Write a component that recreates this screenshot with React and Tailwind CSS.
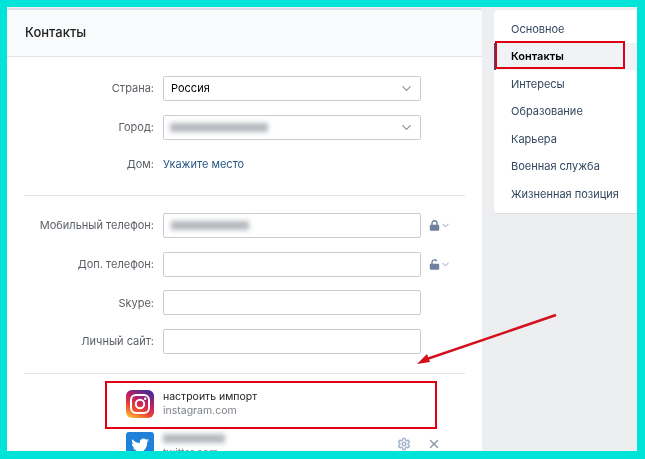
import { ChevronDown, X, Settings } from 'lucide-react';

const labelClass = 'w-[156px] pr-[9px] text-right text-[11px] text-[#5a5f66] shrink-0';
const boxClass = 'w-[258px] h-[25px] bg-white border border-[#c9ccd1] rounded-[2px] flex items-center';

const Smudge = ({ className }) => <div className={`h-[9px] bg-[#b4b8bd] blur-[2.5px] ${className}`} />;

const PadLock = ({ open }) => (
  <svg width="11" height="11" viewBox="0 0 11 11">
    <path
      d={open ? 'M3 5V3.2a2.5 2.5 0 0 1 4.8-.9' : 'M3 5V3.2a2.5 2.5 0 0 1 5 0V5'}
      fill="none"
      stroke="#6f80a0"
      strokeWidth="1.4"
    />
    <rect x="0.8" y="4.8" width="9.4" height="6" rx="1" fill="#6f80a0" />
  </svg>
);

const FormRow = ({ label, children, privacy }) => (
  <div className="flex items-center">
    <div className={labelClass}>{label}</div>
    <div className={boxClass}>{children}</div>
    {privacy && (
      <div className="flex items-center ml-[8px]">
        <PadLock open={privacy === 'open'} />
        <ChevronDown size={11} className="text-[#8b98ad]" />
      </div>
    )}
  </div>
);

const InstagramIcon = () => (
  <svg width="28" height="28" viewBox="0 0 28 28" className="shrink-0">
    <defs>
      <linearGradient id="ig" x1="0.2" y1="1" x2="0.7" y2="0">
        <stop offset="0" stopColor="#fdb83a" />
        <stop offset="0.3" stopColor="#ee4a30" />
        <stop offset="0.6" stopColor="#c4205f" />
        <stop offset="1" stopColor="#4a2d92" />
      </linearGradient>
    </defs>
    <rect width="28" height="28" rx="6" fill="url(#ig)" />
    <rect x="5" y="5" width="18" height="18" rx="5" fill="none" stroke="#fff" strokeWidth="2" />
    <circle cx="14" cy="14" r="4.2" fill="none" stroke="#fff" strokeWidth="2" />
    <circle cx="19.2" cy="8.8" r="1.2" fill="#fff" />
  </svg>
);

const TwitterIcon = () => (
  <svg width="28" height="28" viewBox="0 0 28 28" className="shrink-0">
    <rect width="28" height="28" rx="3" fill="#1f82d8" />
    <path
      fill="#fff"
      d="M23 8.2c-.7.3-1.4.5-2.1.6.8-.5 1.3-1.2 1.6-2-.7.4-1.5.7-2.3.9a3.7 3.7 0 0 0-6.3 3.4c-3-.2-5.7-1.6-7.5-3.9-.3.6-.5 1.2-.5 1.9 0 1.3.6 2.4 1.6 3.1-.6 0-1.2-.2-1.7-.5v.1c0 1.8 1.3 3.3 3 3.6-.6.2-1.1.2-1.7.1.5 1.5 1.8 2.5 3.4 2.6a7.4 7.4 0 0 1-5.5 1.5c1.7 1.1 3.6 1.7 5.7 1.7 6.8 0 10.5-5.6 10.5-10.5v-.5c.7-.5 1.3-1.2 1.8-2z"
    />
  </svg>
);

const App = () => {
  const menu = ['Основное', 'Контакты', 'Интересы', 'Образование', 'Карьера', 'Военная служба', 'Жизненная позиция'];

  return (
    <div className="relative w-[645px] h-[459px] overflow-hidden bg-[#00e3d8] p-[7px] font-['Inter','Liberation_Sans',sans-serif]">
      <div className="flex h-[444px] w-[630px] overflow-hidden bg-[#edeef0] pt-[1px] blur-[0.3px]">
        {/* main card */}
        <div className="w-[475px] shrink-0 bg-white rounded-t-[2px] border-t-2 border-[#dcdde8]">
          <div className="h-[47px] bg-[#fafbfc] border-b border-[#e3e4e8] pl-[18px] flex items-center text-[13px] font-medium text-[#222]">
            Контакты
          </div>

          <div className="pt-[19px] flex flex-col gap-[13.67px]">
            <FormRow label="Страна:">
              <span className="pl-[7px] text-[11px] text-black">Россия</span>
              <ChevronDown size={15} className="ml-auto mr-[6px] text-[#8f98a3]" />
            </FormRow>
            <FormRow label="Город:">
              <Smudge className="ml-[6px] w-[98px]" />
              <ChevronDown size={15} className="ml-auto mr-[6px] text-[#8f98a3]" />
            </FormRow>
          </div>

          <div className="flex items-center mt-[16px]">
            <div className={labelClass}>Дом:</div>
            <span className="text-[11px] text-[#2a5885]">Укажите место</span>
          </div>

          <div className="mx-[17px] mt-[23px] border-t border-[#e3e4e8]" />

          <div className="pt-[17px] flex flex-col gap-[13.67px]">
            <FormRow label="Мобильный телефон:" privacy="closed">
              <Smudge className="ml-[7px] w-[78px]" />
            </FormRow>
            <FormRow label="Доп. телефон:" privacy="open" />
            <FormRow label="Skype:" />
            <FormRow label="Личный сайт:" />
          </div>

          <div className="mx-[17px] mt-[19px] border-t border-[#e3e4e8]" />

          <div className="pl-[119px] mt-[16px] h-[28px] flex items-center gap-[9px]">
            <InstagramIcon />
            <div className="text-[10.5px] leading-[14.5px]">
              <div className="text-[#222]">настроить импорт</div>
              <div className="text-[#7d8288]">instagram.com</div>
            </div>
          </div>

          <div className="pl-[119px] mt-[14px] flex items-start gap-[9px]">
            <TwitterIcon />
            <div className="flex-1 text-[10.5px] leading-[15px]">
              <Smudge className="w-[62px] mt-[2px]" />
              <div className="mt-[2px] text-[#7d8288]">twitter.com</div>
            </div>
            <Settings size={14} strokeWidth={2.6} className="mt-[5px] text-[#a3b4cb]" />
            <X size={14} strokeWidth={2.4} className="mt-[5px] ml-[7px] mr-[41px] text-[#8b98ad]" />
          </div>
        </div>

        {/* side menu */}
        <div className="ml-[12px] w-[143px] h-[204px] mt-[2px] bg-white rounded-l-[4px] border-b border-[#dcdde2] pt-[5px] text-[11px] text-[#33475f]">
          {menu.map((item) =>
            item === 'Контакты' ? (
              <div
                key={item}
                className="h-[27.5px] pl-[15px] flex items-center bg-[#f0f2f5] border-l-2 border-[#2a5885] font-semibold text-black"
              >
                {item}
              </div>
            ) : (
              <div key={item} className="h-[27.5px] pl-[17px] flex items-center">
                {item}
              </div>
            ),
          )}
        </div>
      </div>

      {/* red annotations */}
      <div className="absolute left-[495px] top-[41px] w-[130px] h-[28px] border-[2.5px] border-[#e00012]" />
      <div className="absolute left-[105px] top-[381px] w-[332px] h-[48px] border-[2.5px] border-[#e00012]" />
      <svg className="absolute left-[410px] top-[310px]" width="150" height="60" viewBox="0 0 150 60">
        <line x1="146" y1="5" x2="14" y2="50" stroke="#d40f1c" strokeWidth="2.4" />
        <polygon points="7,54 17,44 20,52" fill="#d40f1c" />
      </svg>
    </div>
  );
};

export default App;
